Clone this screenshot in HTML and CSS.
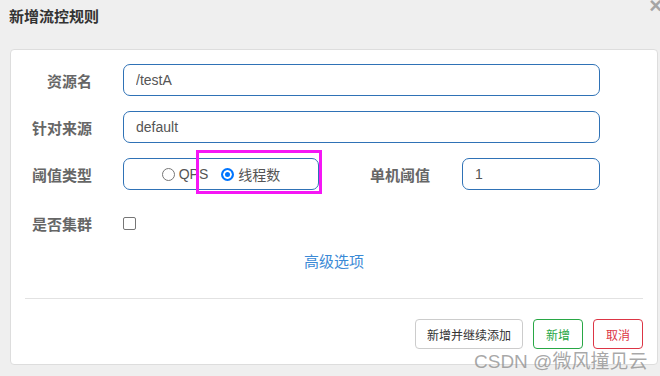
FILE: index.html
```html
<!DOCTYPE html>
<html lang="zh-CN">
<head>
  <meta charset="UTF-8">
  <meta name="viewport" content="width=device-width, initial-scale=1">
  <title>新增流控规则</title>
  <link rel="stylesheet" href="styles.css">
</head>
<body>
  <!-- Cabeçalho do diálogo -->
  <div class="dialog-header">
    <div class="dialog-title">新增流控规则</div>
    <span class="close-btn">×</span>
  </div>

  <div class="dialog-card">
    <form class="rule-form">
      <div class="form-row">
        <label class="form-label">资源名</label>
        <input class="form-input" type="text" value="/testA">
      </div>
      <div class="form-row">
        <label class="form-label">针对来源</label>
        <input class="form-input" type="text" value="default">
      </div>
      <div class="form-row">
        <label class="form-label">阈值类型</label>
        <div class="radio-group">
          <label class="radio-item"><span class="radio"></span>QPS</label>
          <label class="radio-item"><span class="radio checked"></span>线程数</label>
          <div class="highlight-box"></div>
        </div>
        <label class="form-label label-threshold">单机阈值</label>
        <input class="form-input" type="text" value="1">
      </div>
      <div class="form-row row-check">
        <label class="form-label">是否集群</label>
        <span class="checkbox"></span>
      </div>
      <div class="advanced">
        <a href="#" class="advanced-link">高级选项</a>
      </div>
    </form>

    <div class="dialog-footer">
      <button class="btn btn-default">新增并继续添加</button>
      <button class="btn btn-success">新增</button>
      <button class="btn btn-danger">取消</button>
    </div>
  </div>

  <div class="watermark">CSDN @微风撞见云</div>
</body>
</html>
```

FILE: styles.css
```css
* {
  margin: 0;
  padding: 0;
  box-sizing: border-box;
}

body {
  font-family: "Liberation Sans", "Noto Sans CJK SC", sans-serif;
  background: #efefef;
  width: 660px;
  height: 376px;
  position: relative;
  overflow: hidden;
}

.dialog-header {
  position: relative;
  height: 49px;
  padding: 7px 0 0 9px;
}

.dialog-title {
  font-size: 15px;
  font-weight: bold;
  line-height: 20px;
  color: #333;
}

.close-btn {
  position: absolute;
  top: -7px;
  right: -2px;
  font-size: 22px;
  font-weight: bold;
  color: #a5a5a5;
}

.dialog-card {
  margin-left: 10px;
  width: 648px;
  height: 316px;
  background: #fff;
  border: 1px solid #ddd;
  border-radius: 4px;
}

.rule-form {
  padding: 14px 57px 0 21px;
}

.form-row {
  display: flex;
  align-items: center;
  height: 32px;
  margin-bottom: 15px;
}

.form-label {
  flex-shrink: 0;
  width: 60px;
  margin-right: 31px;
  text-align: right;
  white-space: nowrap;
  font-size: 15px;
  font-weight: bold;
  color: #666;
}

.form-input {
  flex: 1;
  min-width: 0;
  height: 32px;
  padding: 0 12px;
  border: 1px solid #2f72b6;
  border-radius: 7px;
  font-family: inherit;
  font-size: 14px;
  color: #555;
  outline: none;
}

.radio-group {
  position: relative;
  flex-shrink: 0;
  display: flex;
  justify-content: center;
  align-items: center;
  gap: 13px;
  width: 196px;
  height: 32px;
  border: 1px solid #2f72b6;
  border-radius: 7px;
  font-size: 14px;
  color: #555;
}

.radio-item {
  display: flex;
  align-items: center;
  white-space: nowrap;
}

.radio {
  width: 13px;
  height: 13px;
  margin-right: 4px;
  border: 1px solid #767676;
  border-radius: 50%;
  background: #fff;
}

.radio.checked {
  border: 2px solid #0075ff;
  box-shadow: inset 0 0 0 2px #fff;
  background: #0075ff;
}

.highlight-box {
  position: absolute;
  left: 72px;
  top: -9px;
  width: 126px;
  height: 44px;
  border: 3px solid #f516f5;
}

.label-threshold {
  margin-left: 51px;
  margin-right: 32px;
}

.row-check {
  height: 36px;
  margin-bottom: 11px;
}

.checkbox {
  width: 13px;
  height: 13px;
  border: 1px solid #767676;
  border-radius: 2px;
}

.advanced {
  margin: 0 -57px 0 -21px;
  text-align: center;
  height: 20px;
  line-height: 20px;
}

.advanced-link {
  font-size: 15px;
  color: #3b8ad6;
  text-decoration: none;
}

.dialog-footer {
  margin: 26px 14px 0 14px;
  padding-top: 20px;
  border-top: 1px solid #e2e2e2;
  display: flex;
  justify-content: flex-end;
  gap: 10px;
}

.btn {
  height: 30px;
  padding: 0 11px;
  background: #fff;
  border: 1px solid #ccc;
  border-radius: 4px;
  font-family: inherit;
  font-size: 12px;
  color: #333;
}

.btn-success {
  border-color: #28a745;
  color: #28a745;
  padding: 0 12px;
}

.btn-danger {
  border-color: #dc3545;
  color: #dc3545;
  padding: 0 12px;
}

.watermark {
  position: absolute;
  left: 474px;
  top: 346px;
  font-size: 19px;
  color: rgba(140, 140, 140, 0.75);
  white-space: nowrap;
}
```
